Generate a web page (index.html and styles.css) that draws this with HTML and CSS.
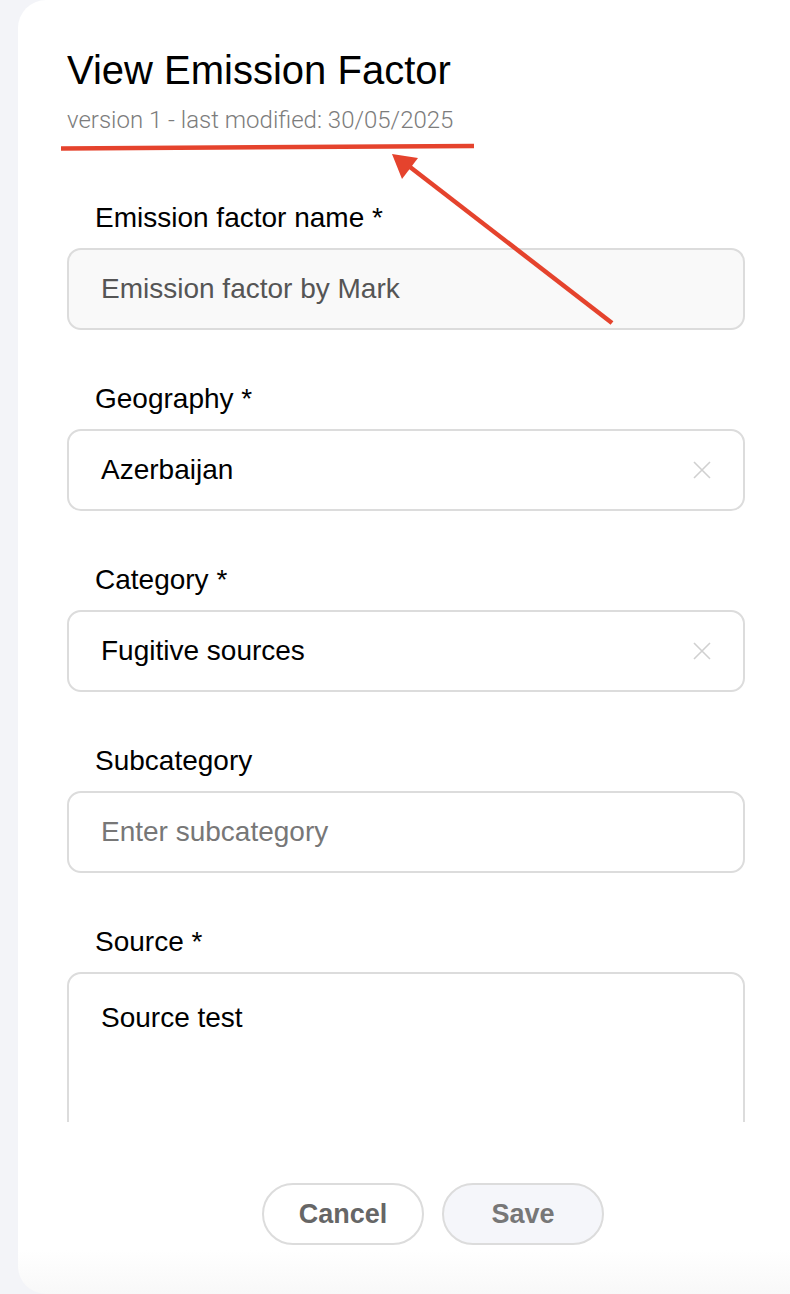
FILE: index.html
```html
<!DOCTYPE html>
<html lang="en">
<head>
  <meta charset="UTF-8">
  <meta name="viewport" content="width=device-width, initial-scale=1.0">
  <title>View Emission Factor</title>
  <link rel="stylesheet" href="styles.css">
</head>
<body>

<div class="panel">
  <!-- Cabecera -->
  <h1 class="panel-title">View Emission Factor</h1>
  <p class="panel-meta">version 1 - last modified: 30/05/2025</p>

  <!-- Formulario -->
  <div class="form-scroll">
    <div class="field">
      <label>Emission factor name *</label>
      <div class="input disabled">Emission factor by Mark</div>
    </div>

    <div class="field">
      <label>Geography *</label>
      <div class="input select">
        <span>Azerbaijan</span>
        <svg class="clear" width="18" height="18" viewBox="0 0 18 18"><path d="M1 1L17 17M17 1L1 17" /></svg>
      </div>
    </div>

    <div class="field">
      <label>Category *</label>
      <div class="input select">
        <span>Fugitive sources</span>
        <svg class="clear" width="18" height="18" viewBox="0 0 18 18"><path d="M1 1L17 17M17 1L1 17" /></svg>
      </div>
    </div>

    <div class="field">
      <label>Subcategory</label>
      <div class="input placeholder">Enter subcategory</div>
    </div>

    <div class="field">
      <label>Source *</label>
      <div class="input textarea">Source test</div>
    </div>
  </div>

  <div class="panel-actions">
    <button class="btn btn-cancel">Cancel</button>
    <button class="btn btn-save">Save</button>
  </div>
</div>

<!-- Anotación roja -->
<svg class="annotation" width="790" height="1294" viewBox="0 0 790 1294">
  <path d="M61 148.5L474 146" />
  <path d="M612 323L410 167" />
  <polygon points="392,154 418,158 402,179" />
</svg>

</body>
</html>
```

FILE: styles.css
```css
/* Estilos generales */
body {
  margin: 0;
  padding: 0;
  background: #f3f4f8;
  font-family: "Liberation Sans", Arial, sans-serif;
  overflow: hidden;
  position: relative;
  height: 1294px;
}
.panel {
  margin-left: 18px;
  height: 1294px;
  box-sizing: border-box;
  padding: 46px 0 0 49px;
  background: linear-gradient(to bottom, #fff 0, #fff 1250px, #f8f8f8 1294px);
  border-radius: 28px 0 0 28px;
}
.panel-title {
  margin: 0;
  font-size: 40px;
  line-height: 48px;
  font-weight: normal;
  color: #000;
}
.panel-meta {
  margin: 12px 0 0;
  font-family: Roboto, sans-serif;
  font-weight: 300;
  font-size: 24px;
  line-height: 28px;
  color: #7c7c7c;
}
.form-scroll {
  margin-top: 39px;
  height: 949px;
  padding: 29px 45px 0 0;
  box-sizing: border-box;
  overflow: hidden;
}
.field {
  margin-bottom: 53px;
}
.field label {
  display: block;
  padding-left: 28px;
  margin-bottom: 14px;
  font-size: 28px;
  line-height: 32px;
  color: #000;
}
.input {
  height: 82px;
  box-sizing: border-box;
  padding: 0 32px;
  border: 2px solid #dcdcdc;
  border-radius: 14px;
  background: #fff;
  display: flex;
  align-items: center;
  font-size: 28px;
  color: #000;
}
.input.disabled {
  background: #f9f9f9;
  color: #555;
}
.input.placeholder {
  color: #777;
}
.input.select {
  justify-content: space-between;
}
.clear path {
  stroke: #d0d0d0;
  stroke-width: 1.6;
  fill: none;
}
.input.textarea {
  height: 220px;
  align-items: flex-start;
  padding-top: 28px;
  line-height: 32px;
}
.panel-actions {
  margin-top: 61px;
  padding-left: 9px;
  display: flex;
  justify-content: center;
  gap: 18px;
}
.btn {
  width: 162px;
  height: 62px;
  border: 2px solid #dcdcdc;
  border-radius: 31px;
  font-family: "Liberation Sans", Arial, sans-serif;
  font-weight: bold;
  font-size: 27px;
  cursor: pointer;
}
.btn-cancel {
  background: #fff;
  color: #666;
}
.btn-save {
  background: #f5f6fa;
  color: #777;
}
/* Anotación */
.annotation {
  position: absolute;
  left: 0;
  top: 0;
  pointer-events: none;
}
.annotation path {
  stroke: #e5432d;
  stroke-width: 4.5;
  fill: none;
}
.annotation polygon {
  fill: #e5432d;
}
```
